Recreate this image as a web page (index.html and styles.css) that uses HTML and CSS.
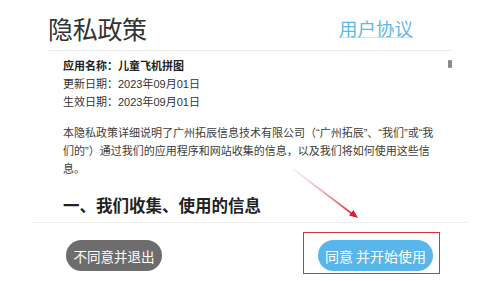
FILE: index.html
```html
<!DOCTYPE html>
<html lang="zh-CN">
<head>
<meta charset="utf-8">
<link rel="stylesheet" href="styles.css">
</head>
<body>
<div class="page">
  <header class="header">
    <h1 class="title">隐私政策</h1>
    <a class="link">用户协议</a>
  </header>
  <main class="content">
    <div class="thumb"></div>
    <div class="meta">
      <div class="meta-name">应用名称：儿童飞机拼图</div>
      <div>更新日期：2023年09月01日</div>
      <div>生效日期：2023年09月01日</div>
    </div>
    <p class="para">本隐私政策详细说明了广州拓辰信息技术有限公司（“广州拓辰”、“我们”或“我们的”）通过我们的应用程序和网站收集的信息，以及我们将如何使用这些信息。</p>
    <h2 class="section">一、我们收集、使用的信息</h2>
  </main>
  <footer class="footer">
    <button class="btn btn-gray">不同意并退出</button>
    <button class="btn btn-blue">同意 并开始使用</button>
  </footer>
  <div class="highlight"></div>
  <svg class="arrow" width="80" height="60" viewBox="0 0 80 60">
    <defs>
      <linearGradient id="ag" x1="0" y1="0" x2="1" y2="1">
        <stop offset="0" stop-color="#f3c9cc" stop-opacity="0.3"/>
        <stop offset="1" stop-color="#d3222e"/>
      </linearGradient>
    </defs>
    <line x1="2" y1="2" x2="64" y2="49" stroke="url(#ag)" stroke-width="1.6"/>
    <path d="M67 51 L58 48.5 L62.5 43 Z" fill="#d3222e"/>
  </svg>
</div>
</body>
</html>
```
FILE: styles.css
```css
* { box-sizing: border-box; }
html, body { margin: 0; padding: 0; background: #fff; }
body { font-family: "Liberation Sans", "Noto Sans CJK SC", sans-serif; }
.page { position: relative; width: 500px; height: 281px; overflow: hidden; background: #fff; }
.header {
  margin: 0 48px;
  height: 51px;
  border-bottom: 1px solid #ececec;
  display: flex;
  justify-content: space-between;
  align-items: flex-start;
  padding-top: 13px;
}
.title {
  margin: 0;
  font-family: "Noto Sans CJK SC", sans-serif;
  font-weight: 400;
  font-size: 25px;
  line-height: 30px;
  color: #333;
  letter-spacing: -0.3px;
}
.link {
  font-family: "Noto Sans CJK SC", sans-serif;
  font-size: 18.5px;
  line-height: 24px;
  margin-top: 3px;
  margin-right: 39px;
  color: #5fb8e8;
  text-decoration: underline;
  text-decoration-color: rgba(95,184,232,0.35);
  text-underline-offset: 1px;
}
.content {
  position: relative;
  margin: 0 48px;
  height: 171px;
  overflow: hidden;
  padding: 6px 15px 0;
}
.thumb { position: absolute; right: 0; top: 9px; width: 4px; height: 8px; background: #8a8a8a; border-radius: 1px; }
.meta { font-size: 11px; line-height: 18px; color: #333; }
.meta-name { font-weight: 700; color: #222; }
.para { margin: 13px 0 0; width: 376px; font-size: 11px; line-height: 18px; color: #3c3c3c; }
.section {
  margin: 15px 0 0;
  font-family: "Noto Sans CJK SC", sans-serif;
  font-size: 16.5px;
  line-height: 24px;
  font-weight: 700;
  color: #222;
}
.footer {
  margin: 0 32px;
  border-top: 1px solid #ededed;
  height: 59px;
  display: flex;
  justify-content: space-between;
  align-items: flex-start;
  padding: 17px 34px 0;
}
.btn {
  border: 0;
  height: 31px;
  border-radius: 16px;
  color: #fff;
  font-family: "Noto Sans CJK SC", sans-serif;
  font-size: 13.5px;
  padding: 0;
  display: flex;
  align-items: center;
  justify-content: center;
}
.btn-gray { width: 96px; background: #6d6d6d; }
.btn-blue { width: 115px; background: #58b6ea; font-size: 14px; margin-right: 1px; }
.highlight {
  position: absolute;
  left: 303px;
  top: 232px;
  width: 137px;
  height: 42px;
  border: 1.5px solid #d8343c;
}
.arrow { position: absolute; left: 291px; top: 167px; }
```
